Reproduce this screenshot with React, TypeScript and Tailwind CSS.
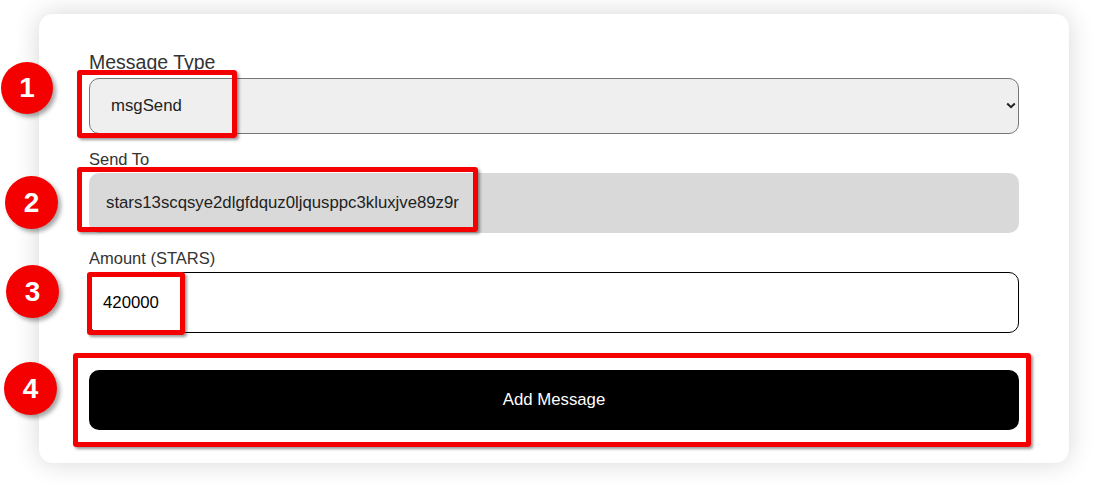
import React from 'react';

const Badge = ({ n, className }: { n: number; className: string }) => (
  <div
    className={`absolute flex items-center justify-center rounded-full bg-[#f50000] text-white font-bold text-[28px] shadow-[3px_3px_4px_rgba(0,0,0,0.35)] ${className}`}
  >
    {n}
  </div>
);

const Mark = ({ className }: { className: string }) => (
  <div
    className={`absolute border-[5px] border-[#f50000] rounded-[3px] shadow-[2px_2px_3px_rgba(0,0,0,0.4)] ${className}`}
  />
);

const Field = ({ label, children }: { label: string; children: React.ReactNode }) => (
  <div className="flex flex-col gap-[5px]">
    <label className="text-[16.5px] leading-[18px] text-[#333]">{label}</label>
    {children}
  </div>
);

export default function App() {
  return (
    <div className="relative w-[1093px] h-[484px] bg-white font-['Liberation_Sans',Arial,sans-serif] overflow-hidden">
      <div className="pt-[14px] pl-[39px]">
        <div className="flex flex-col w-[1030px] bg-white rounded-[14px] shadow-[0_0_26px_rgba(0,0,0,0.16)] px-[50px] pt-[37px] pb-[33px]">
          <div className="flex flex-col gap-[5px]">
            <label className="text-[19.5px] leading-[22px] text-[#333]">Message Type</label>
            <div className="relative">
              <select
                className="block w-full h-[56px] appearance-none bg-[#efefef] border border-[#767676] rounded-[10px] pl-[21px] text-[16.75px] text-[#222] outline-none"
                defaultValue="msgSend"
              >
                <option value="msgSend">msgSend</option>
              </select>
              <svg
                className="absolute right-[3px] top-[24px] w-[10px] h-[7px] pointer-events-none"
                viewBox="0 0 10 7"
                fill="none"
              >
                <path d="M1.2 1.5 5 5.2 8.8 1.5" stroke="#222" strokeWidth="2" />
              </svg>
            </div>
          </div>

          <div className="mt-[16px]">
            <Field label="Send To">
              <input
                readOnly
                value="stars13scqsye2dlgfdquz0ljqusppc3kluxjve89z9r"
                className="block w-full h-[60px] bg-[#d9d9d9] rounded-[10px] pl-[17px] text-[16.75px] text-[#222] outline-none"
              />
            </Field>
          </div>

          <div className="mt-[16px]">
            <Field label="Amount (STARS)">
              <input
                readOnly
                value="420000"
                className="block w-full h-[61px] bg-white border border-black rounded-[10px] pl-[13px] text-[16.75px] text-black outline-none"
              />
            </Field>
          </div>

          <button className="mt-[37px] w-full h-[60px] bg-black rounded-[10px] text-white text-[16.75px]">
            Add Message
          </button>
        </div>
      </div>

      <Mark className="left-[77px] top-[70px] w-[160px] h-[68px]" />
      <Mark className="left-[77px] top-[167px] w-[401px] h-[65px]" />
      <Mark className="left-[87px] top-[272px] w-[98px] h-[63px]" />
      <Mark className="left-[73px] top-[353px] w-[958px] h-[94px]" />

      <Badge n={1} className="left-[1px] top-[62px] w-[52px] h-[52px]" />
      <Badge n={2} className="left-[5px] top-[176px] w-[53px] h-[53px]" />
      <Badge n={3} className="left-[6px] top-[265px] w-[53px] h-[53px]" />
      <Badge n={4} className="left-[4px] top-[362px] w-[53px] h-[53px]" />
    </div>
  );
}
